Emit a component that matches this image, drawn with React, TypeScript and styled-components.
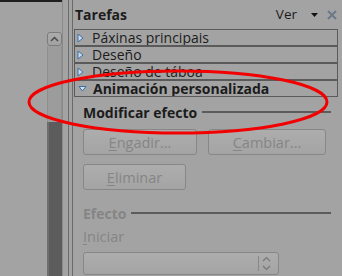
import React from 'react';
import styled, { createGlobalStyle } from 'styled-components';

const GlobalStyle = createGlobalStyle`
	html, body {
		margin: 0;
		padding: 0;
		background: #a3a3a3;
	}
	body {
		font-family: "Open Sans", "Noto Sans", sans-serif;
		color: #1c1c1c;
	}
`;

const Screen = styled.div`
	position: relative;
	width: 342px;
	height: 276px;
	overflow: hidden;
	display: flex;
	background: #a3a3a3;
`;

const LeftPane = styled.div`
	width: 62px;
	flex-shrink: 0;
	border-top: 2px solid #1f1f1f;
	box-sizing: border-box;
	display: flex;
	justify-content: flex-end;
`;

const Scrollbar = styled.div`
	width: 15px;
	margin-top: 30px;
	display: flex;
	flex-direction: column;
`;

const ScrollUp = styled.div`
	height: 14px;
	box-sizing: border-box;
	border: 1px solid #7c7c7c;
	border-radius: 3px;
	background: linear-gradient(#acacac, #a1a1a1);
	display: flex;
	align-items: center;
	justify-content: center;
`;

const Trough = styled.div`
	height: 76px;
	background: #9c9c9c;
	border-left: 1px solid #8f8f8f;
	border-right: 1px solid #8f8f8f;
`;

const Thumb = styled.div`
	flex: 1;
	background: #5c5c5c;
	border-left: 2px solid #6e6e6e;
`;

const Splitter = styled.div`
	width: 11px;
	flex-shrink: 0;
	box-sizing: border-box;
	border-left: 1px solid #8a8a8a;
	border-right: 1px solid #6a6a6a;
	padding-left: 5px;
`;

const SplitLine = styled.div`
	height: 100%;
	width: 1px;
	background: #6c6c6c;
`;

const TaskPanel = styled.div`
	flex: 1;
	display: flex;
	flex-direction: column;
	min-width: 0;
`;

const Header = styled.div`
	height: 29px;
	display: flex;
	align-items: center;
	padding-left: 2px;
	padding-right: 5px;
	box-sizing: border-box;
`;

const Title = styled.div`
	font-weight: bold;
	font-size: 14px;
	flex: 1;
	margin-top: -1px;
`;

const ViewMenu = styled.div`
	font-size: 13.5px;
	margin-right: 14px;
	margin-top: -2px;
`;

const Deck = styled.div`
	margin-left: 1px;
	margin-right: 4px;
	display: flex;
	flex-direction: column;
`;

const DeckRow = styled.div<{ $open?: boolean }>`
	height: 17px;
	box-sizing: border-box;
	border: 1px solid #5a5a5a;
	display: flex;
	align-items: center;
	padding-left: ${({ $open }) => ($open ? '3px' : '2px')};
	font-size: 14px;
	font-weight: ${({ $open }) => ($open ? 'bold' : 'normal')};
	line-height: 15px;
	white-space: nowrap;
	overflow: hidden;
	svg {
		flex-shrink: 0;
		margin-right: ${({ $open }) => ($open ? '6px' : '8px')};
	}
`;

const Content = styled.div`
	padding-left: 10px;
	padding-right: 11px;
	display: flex;
	flex-direction: column;
	align-items: flex-start;
`;

const SectionHead = styled.div<{ $disabled?: boolean; $gap: number }>`
	align-self: stretch;
	height: 18px;
	margin-top: ${({ $gap }) => $gap}px;
	display: flex;
	align-items: center;
	font-size: 14px;
	font-weight: bold;
	color: ${({ $disabled }) => ($disabled ? '#858585' : '#1c1c1c')};
`;

const Rule = styled.div`
	flex: 1;
	height: 2px;
	margin-left: 5px;
	background: #5c5c5c;
`;

const ButtonRow = styled.div`
	display: flex;
	gap: 11px;
	margin-top: 8px;
`;

const Button = styled.div<{ $width: number; $gap?: number }>`
	width: ${({ $width }) => $width}px;
	height: 26px;
	margin-top: ${({ $gap }) => $gap ?? 0}px;
	box-sizing: border-box;
	border: 1px solid #878787;
	border-radius: 3px;
	background: linear-gradient(#adadad, #a4a4a4);
	display: flex;
	align-items: center;
	justify-content: center;
	font-size: 14.5px;
	color: #858585;
	u {
		text-decoration-thickness: 1px;
		text-underline-offset: 2px;
	}
`;

const FieldLabel = styled.div`
	height: 18px;
	margin-top: 6px;
	font-size: 14.5px;
	line-height: 18px;
	color: #858585;
	u {
		text-decoration-thickness: 1px;
		text-underline-offset: 2px;
	}
`;

const Select = styled.div`
	width: 196px;
	height: 23px;
	margin-top: 6px;
	box-sizing: border-box;
	border: 1px solid #878787;
	border-radius: 3px;
	background: linear-gradient(#adadad, #a4a4a4);
	display: flex;
	justify-content: flex-end;
	align-items: center;
	padding-right: 7px;
`;

const SelectDivider = styled.div`
	width: 1px;
	height: 15px;
	background: #888888;
	margin-right: 3px;
`;

const Annotation = styled.svg`
	position: absolute;
	left: 0;
	top: 0;
	pointer-events: none;
`;

const RightArrow = () => (
	<svg width="7" height="10" viewBox="0 0 7 10">
		<polygon points="1,1 6,5 1,9" fill="#c9def3" stroke="#41709f" strokeWidth="1" strokeLinejoin="round"/>
	</svg>
);

const DownArrow = () => (
	<svg width="9" height="7" viewBox="0 0 9 7">
		<polygon points="1,1.5 8,1.5 4.5,6" fill="#c9def3" stroke="#41709f" strokeWidth="1" strokeLinejoin="round"/>
	</svg>
);

const sections = [ 'Páxinas principais', 'Deseño', 'Deseño de táboa' ];

const Mnemonic = ({ text }: { text: string }) => <><u>{text[0]}</u>{text.slice(1)}</>;

export default function App() {
	return <>
		<GlobalStyle/>
		<Screen>
			<LeftPane>
				<Scrollbar>
					<ScrollUp>
						<svg width="9" height="6" viewBox="0 0 9 6">
							<polyline points="1,5 4.5,1.5 8,5" fill="none" stroke="#4a4a4a" strokeWidth="1.5"/>
						</svg>
					</ScrollUp>
					<Trough/>
					<Thumb/>
				</Scrollbar>
			</LeftPane>
			<Splitter><SplitLine/></Splitter>
			<TaskPanel>
				<Header>
					<Title>Tarefas</Title>
					<ViewMenu>Ver</ViewMenu>
					<svg width="7" height="4" viewBox="0 0 7 4" style={{ marginRight: 9 }}>
						<polygon points="0,0 7,0 3.5,4" fill="#111"/>
					</svg>
					<svg width="10" height="10" viewBox="0 0 10 10">
						<path d="M1 1 L9 9 M9 1 L1 9" stroke="#6b7988" strokeWidth="2"/>
					</svg>
				</Header>
				<Deck>
					{sections.map(s => <DeckRow key={s}><RightArrow/>{s}</DeckRow>)}
					<DeckRow $open><DownArrow/>Animación personalizada</DeckRow>
				</Deck>
				<Content>
					<SectionHead $gap={6}>Modificar efecto<Rule/></SectionHead>
					<ButtonRow>
						<Button $width={114}><span><Mnemonic text="Engadir..."/></span></Button>
						<Button $width={118}><span><Mnemonic text="Cambiar..."/></span></Button>
					</ButtonRow>
					<Button $width={103} $gap={9}><span><Mnemonic text="Eliminar"/></span></Button>
					<SectionHead $gap={14} $disabled>Efecto<Rule/></SectionHead>
					<FieldLabel><Mnemonic text="Iniciar"/></FieldLabel>
					<Select>
						<SelectDivider/>
						<svg width="9" height="15" viewBox="0 0 9 15">
							<polyline points="1,5 4.5,1.5 8,5" fill="none" stroke="#777" strokeWidth="1.2"/>
							<polyline points="1,10 4.5,13.5 8,10" fill="none" stroke="#777" strokeWidth="1.2"/>
						</svg>
					</Select>
				</Content>
			</TaskPanel>
			<Annotation width="342" height="276" viewBox="0 0 342 276">
				<ellipse cx="178" cy="102" rx="149" ry="31" fill="none" stroke="#f20000" strokeWidth="3"/>
			</Annotation>
		</Screen>
	</>;
}
